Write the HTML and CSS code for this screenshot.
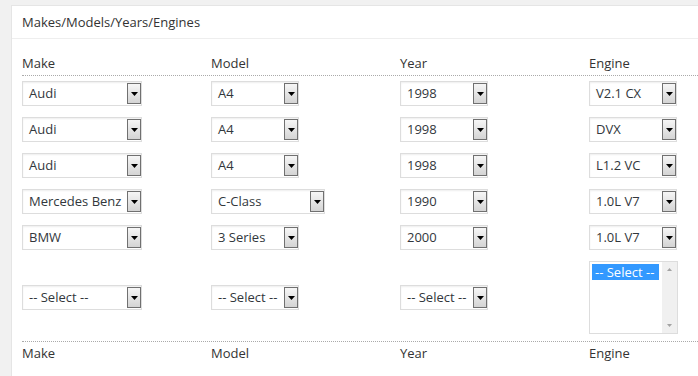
FILE: index.html
```html
<!DOCTYPE html>
<html lang="en">
<head>
  <meta charset="UTF-8">
  <meta name="viewport" content="width=device-width, initial-scale=1.0">
  <title>Makes/Models/Years/Engines</title>
  <link rel="stylesheet" href="styles.css">
</head>
<body>
  <div class="panel">
    <div class="panel-title">Makes/Models/Years/Engines</div>

    <div class="panel-body">
      <div class="grid labels">
        <div>Make</div>
        <div>Model</div>
        <div>Year</div>
        <div>Engine</div>
      </div>

      <div class="rows">
        <div class="grid row">
          <div class="select wide"><span class="value">Audi</span><span class="arrow"><svg width="7" height="4" viewBox="0 0 7 4"><polygon points="0,0 7,0 3.5,4"/></svg></span></div>
          <div class="select"><span class="value">A4</span><span class="arrow"><svg width="7" height="4" viewBox="0 0 7 4"><polygon points="0,0 7,0 3.5,4"/></svg></span></div>
          <div class="select"><span class="value">1998</span><span class="arrow"><svg width="7" height="4" viewBox="0 0 7 4"><polygon points="0,0 7,0 3.5,4"/></svg></span></div>
          <div class="select"><span class="value">V2.1 CX</span><span class="arrow"><svg width="7" height="4" viewBox="0 0 7 4"><polygon points="0,0 7,0 3.5,4"/></svg></span></div>
        </div>

        <div class="grid row">
          <div class="select wide"><span class="value">Audi</span><span class="arrow"><svg width="7" height="4" viewBox="0 0 7 4"><polygon points="0,0 7,0 3.5,4"/></svg></span></div>
          <div class="select"><span class="value">A4</span><span class="arrow"><svg width="7" height="4" viewBox="0 0 7 4"><polygon points="0,0 7,0 3.5,4"/></svg></span></div>
          <div class="select"><span class="value">1998</span><span class="arrow"><svg width="7" height="4" viewBox="0 0 7 4"><polygon points="0,0 7,0 3.5,4"/></svg></span></div>
          <div class="select"><span class="value">DVX</span><span class="arrow"><svg width="7" height="4" viewBox="0 0 7 4"><polygon points="0,0 7,0 3.5,4"/></svg></span></div>
        </div>

        <div class="grid row">
          <div class="select wide"><span class="value">Audi</span><span class="arrow"><svg width="7" height="4" viewBox="0 0 7 4"><polygon points="0,0 7,0 3.5,4"/></svg></span></div>
          <div class="select"><span class="value">A4</span><span class="arrow"><svg width="7" height="4" viewBox="0 0 7 4"><polygon points="0,0 7,0 3.5,4"/></svg></span></div>
          <div class="select"><span class="value">1998</span><span class="arrow"><svg width="7" height="4" viewBox="0 0 7 4"><polygon points="0,0 7,0 3.5,4"/></svg></span></div>
          <div class="select"><span class="value">L1.2 VC</span><span class="arrow"><svg width="7" height="4" viewBox="0 0 7 4"><polygon points="0,0 7,0 3.5,4"/></svg></span></div>
        </div>

        <div class="grid row">
          <div class="select wide"><span class="value">Mercedes Benz</span><span class="arrow"><svg width="7" height="4" viewBox="0 0 7 4"><polygon points="0,0 7,0 3.5,4"/></svg></span></div>
          <div class="select medium"><span class="value">C-Class</span><span class="arrow"><svg width="7" height="4" viewBox="0 0 7 4"><polygon points="0,0 7,0 3.5,4"/></svg></span></div>
          <div class="select"><span class="value">1990</span><span class="arrow"><svg width="7" height="4" viewBox="0 0 7 4"><polygon points="0,0 7,0 3.5,4"/></svg></span></div>
          <div class="select"><span class="value">1.0L V7</span><span class="arrow"><svg width="7" height="4" viewBox="0 0 7 4"><polygon points="0,0 7,0 3.5,4"/></svg></span></div>
        </div>

        <div class="grid row">
          <div class="select wide"><span class="value">BMW</span><span class="arrow"><svg width="7" height="4" viewBox="0 0 7 4"><polygon points="0,0 7,0 3.5,4"/></svg></span></div>
          <div class="select"><span class="value">3 Series</span><span class="arrow"><svg width="7" height="4" viewBox="0 0 7 4"><polygon points="0,0 7,0 3.5,4"/></svg></span></div>
          <div class="select"><span class="value">2000</span><span class="arrow"><svg width="7" height="4" viewBox="0 0 7 4"><polygon points="0,0 7,0 3.5,4"/></svg></span></div>
          <div class="select"><span class="value">1.0L V7</span><span class="arrow"><svg width="7" height="4" viewBox="0 0 7 4"><polygon points="0,0 7,0 3.5,4"/></svg></span></div>
        </div>

        <!-- empty row: engine is a list box -->
        <div class="grid row">
          <div class="select wide"><span class="value">-- Select --</span><span class="arrow"><svg width="7" height="4" viewBox="0 0 7 4"><polygon points="0,0 7,0 3.5,4"/></svg></span></div>
          <div class="select"><span class="value">-- Select --</span><span class="arrow"><svg width="7" height="4" viewBox="0 0 7 4"><polygon points="0,0 7,0 3.5,4"/></svg></span></div>
          <div class="select"><span class="value">-- Select --</span><span class="arrow"><svg width="7" height="4" viewBox="0 0 7 4"><polygon points="0,0 7,0 3.5,4"/></svg></span></div>
          <div class="listbox">
            <div class="options">
              <div class="option selected">-- Select --</div>
            </div>
            <div class="scrollbar">
              <svg width="5" height="3" viewBox="0 0 5 3"><polygon points="0,3 5,3 2.5,0"/></svg>
              <svg width="5" height="3" viewBox="0 0 5 3"><polygon points="0,0 5,0 2.5,3"/></svg>
            </div>
          </div>
        </div>
      </div>

      <div class="grid labels footer">
        <div>Make</div>
        <div>Model</div>
        <div>Year</div>
        <div>Engine</div>
      </div>
    </div>
  </div>
</body>
</html>
```

FILE: styles.css
```css
html, body {
  height: 100%;
}

body {
  margin: 0;
  padding: 5px 0 0 11px;
  box-sizing: border-box;
  background-color: #f1f1f1;
  font-family: "Open Sans", "Liberation Sans", sans-serif;
  font-size: 13px;
  color: #333;
  overflow: hidden;
}

.panel {
  background: #fff;
  border: 1px solid #e5e5e5;
  border-right: none;
  border-bottom: none;
  height: 100%;
  box-sizing: border-box;
}

.panel-title {
  padding: 7px 10px;
  line-height: 18px;
  border-bottom: 1px solid #eee;
}

.panel-body {
  padding: 0 0 0 10px;
}

.grid {
  display: grid;
  grid-template-columns: 189px 189px 189px 1fr;
}

.labels {
  padding-top: 15px;
  padding-bottom: 3px;
  line-height: 18px;
  border-bottom: 1px dotted #aaa;
}

.labels.footer {
  padding-top: 2px;
  border-bottom: none;
  border-top: 1px dotted #aaa;
  margin-top: 7px;
}

.rows {
  display: flex;
  flex-direction: column;
  gap: 11px;
  margin-top: 5px;
}

.row {
  align-items: center;
}

.select {
  display: flex;
  width: 88px;
  height: 25px;
  box-sizing: border-box;
  border: 1px solid #ddd;
  box-shadow: inset 0 1px 2px rgba(0, 0, 0, 0.07);
  background: #fff;
  color: #32373c;
}

.select.wide {
  width: 120px;
}

.select.medium {
  width: 114px;
}

.value {
  flex: 1;
  padding-left: 6px;
  line-height: 23px;
  white-space: nowrap;
  overflow: hidden;
}

.arrow {
  width: 14px;
  margin: 1px 0 0;
  height: 21px;
  border: 1px solid #707070;
  background: linear-gradient(#f6f6f6, #d4d4d4);
  display: flex;
  justify-content: center;
  padding-top: 8px;
  box-sizing: border-box;
}

.arrow svg {
  fill: #000;
}

.listbox {
  display: flex;
  width: 89px;
  height: 73px;
  box-sizing: border-box;
  border: 1px solid #ddd;
  background: #fff;
}

.options {
  flex: 1;
  padding: 2px 2px 0;
}

.option {
  line-height: 16px;
  padding-left: 3px;
  white-space: nowrap;
}

.option.selected {
  background: #3399ff;
  color: #fff;
}

.scrollbar {
  width: 15px;
  background: #f0f0f0;
  display: flex;
  flex-direction: column;
  justify-content: space-between;
  align-items: center;
  padding: 6px 0;
  margin-left: 1px;
}

.scrollbar svg {
  fill: #a3a3a3;
}
```
